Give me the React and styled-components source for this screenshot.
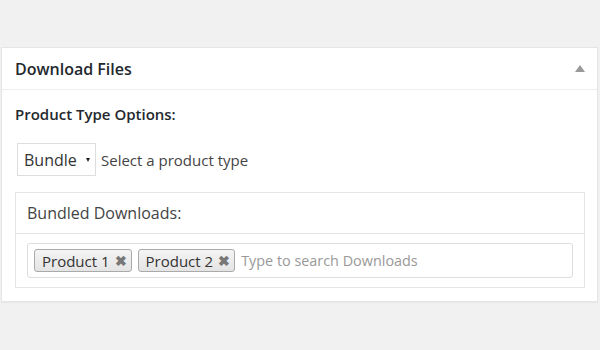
import React from 'react';
import styled, { createGlobalStyle } from 'styled-components';

const GlobalStyle = createGlobalStyle`
  html, body {
    margin: 0;
    padding: 0;
    background: #f1f1f1;
    font-family: "Open Sans", "Liberation Sans", sans-serif;
    color: #23282d;
  }
`;

const Page = styled.div`
  width: 600px;
  height: 350px;
  padding: 47px 2px 0 1px;
  box-sizing: border-box;
`;

const Panel = styled.div`
  background: #fff;
  border: 1px solid #e5e5e5;
  box-shadow: 0 1px 1px rgba(0, 0, 0, 0.04);
  height: 255px;
  box-sizing: border-box;
`;

const PanelHeader = styled.div`
  display: flex;
  align-items: center;
  justify-content: space-between;
  height: 41px;
  padding: 0 12px 0 13px;
  border-bottom: 1px solid #eee;
`;

const Title = styled.h2`
  margin: 0;
  font-size: 16px;
  font-weight: 600;
  color: #23282d;
`;

const Toggle = styled.span`
  width: 0;
  height: 0;
  border-left: 5px solid transparent;
  border-right: 5px solid transparent;
  border-bottom: 7px solid #999;
`;

const PanelBody = styled.div`
  padding: 14px 13px 0 13px;
`;

const Label = styled.p`
  margin: 0 0 19px;
  font-size: 15px;
  font-weight: 600;
  color: #23282d;
`;

const TypeRow = styled.div`
  display: flex;
  align-items: center;
  gap: 5px;
  margin-left: 2px;
`;

const Select = styled.div`
  display: flex;
  align-items: center;
  justify-content: space-between;
  width: 79px;
  height: 33px;
  box-sizing: border-box;
  padding: 0 5px 0 6px;
  border: 1px solid #ddd;
  font-size: 16px;
  color: #333;
`;

const Caret = styled.span`
  width: 0;
  height: 0;
  border-left: 2.5px solid transparent;
  border-right: 2.5px solid transparent;
  border-top: 4px solid #222;
`;

const Hint = styled.span`
  font-size: 15px;
  color: #444;
`;

const Box = styled.div`
  margin-top: 16px;
  border: 1px solid #e5e5e5;
  width: 570px;
  box-sizing: border-box;
`;

const BoxHeader = styled.div`
  height: 40px;
  display: flex;
  align-items: center;
  padding-left: 11px;
  border-bottom: 1px solid #e5e5e5;
  font-size: 16px;
  color: #444;
`;

const BoxBody = styled.div`
  padding: 9px 11px 9px 11px;
`;

const TokenInput = styled.div`
  display: flex;
  align-items: center;
  gap: 6px;
  height: 35px;
  box-sizing: border-box;
  padding: 0 6px;
  border: 1px solid #ddd;
  border-radius: 3px;
`;

const Token = styled.span`
  display: inline-flex;
  align-items: center;
  gap: 5px;
  height: 23px;
  box-sizing: border-box;
  padding: 0 4px 0 7px;
  border: 1px solid #aaa;
  border-radius: 3px;
  background: linear-gradient(#f4f4f4, #e4e4e4);
  font-size: 15px;
  color: #333;
`;

const Remove = styled.span`
  font-size: 14px;
  font-weight: 700;
  color: #777;
  line-height: 1;
`;

const Placeholder = styled.span`
  font-size: 14.4px;
  color: #999;
`;

export default function App() {
  return (
    <>
      <GlobalStyle />
      <Page>
        <Panel>
          <PanelHeader>
            <Title>Download Files</Title>
            <Toggle />
          </PanelHeader>
          <PanelBody>
            <Label>Product Type Options:</Label>
            <TypeRow>
              <Select>
                Bundle
                <Caret />
              </Select>
              <Hint>Select a product type</Hint>
            </TypeRow>
            <Box>
              <BoxHeader>Bundled Downloads:</BoxHeader>
              <BoxBody>
                <TokenInput>
                  <Token>Product 1<Remove>✖</Remove></Token>
                  <Token>Product 2<Remove>✖</Remove></Token>
                  <Placeholder>Type to search Downloads</Placeholder>
                </TokenInput>
              </BoxBody>
            </Box>
          </PanelBody>
        </Panel>
      </Page>
    </>
  );
}
